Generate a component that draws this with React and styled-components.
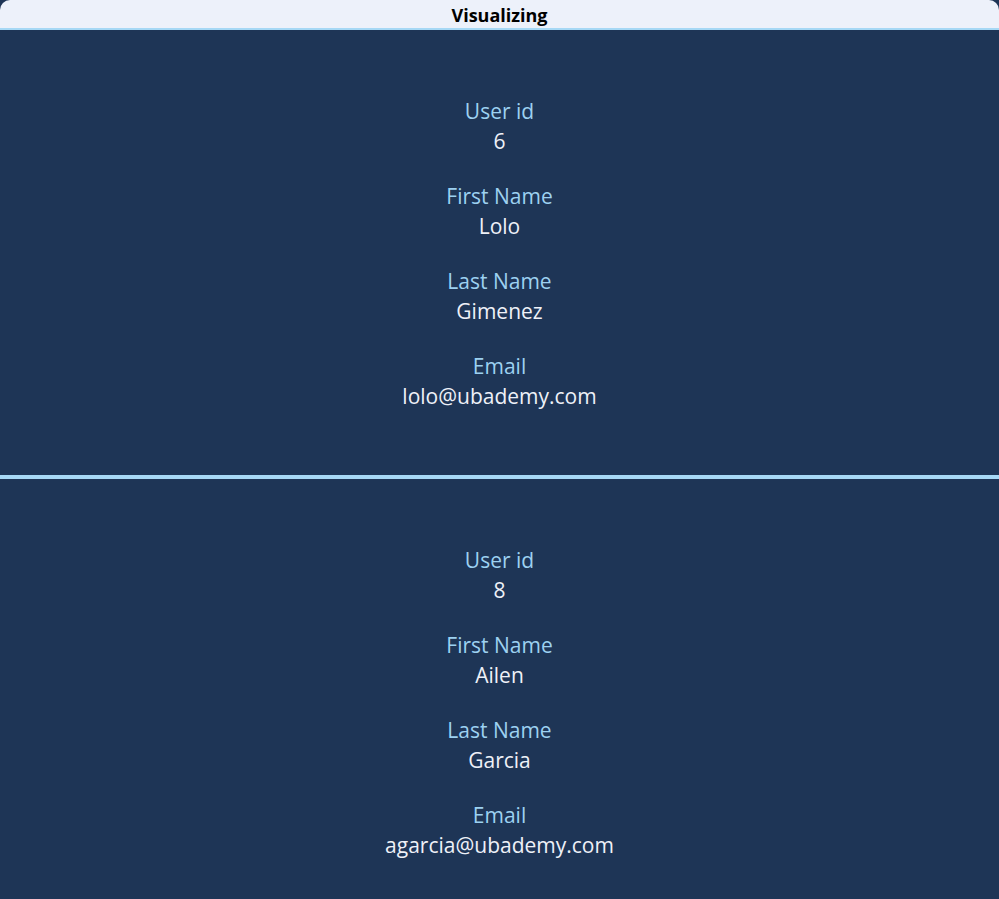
import React from 'react';
import styled, {createGlobalStyle} from 'styled-components';

const GlobalStyle = createGlobalStyle`
  body {
    margin: 0;
    background-color: #1e3556;
    font-family: "Open Sans", "Noto Sans", sans-serif;
  }
`;

const Page = styled.div`
  display: flex;
  flex-direction: column;
  min-height: 100vh;
`;

const Header = styled.header`
  height: 30px;
  box-sizing: border-box;
  padding-top: 2px;
  background-color: #edf1fa;
  border-radius: 10px 10px 0 0;
  border-bottom: 2px solid #a6d8f5;
  display: flex;
  align-items: center;
  justify-content: center;
  font-size: 18px;
  font-weight: bold;
  color: #000;
`;

const UserCard = styled.section`
  display: flex;
  flex-direction: column;
  align-items: center;
  gap: 25px;
  padding: 66px 0 64px;
  border-top: ${(props) => props.first ? 'none' : '4px solid #a6d8f5'};
`;

const Field = styled.div`
  display: flex;
  flex-direction: column;
  align-items: center;
  font-size: 21px;
  line-height: 30px;
`;

const Label = styled.span`
  color: #9dd1f1;
`;

const Value = styled.span`
  color: #eef1f8;
`;

const users = [
  {id: 6, firstName: 'Lolo', lastName: 'Gimenez', email: 'lolo@ubademy.com'},
  {id: 8, firstName: 'Ailen', lastName: 'Garcia', email: 'agarcia@ubademy.com'},
];

function App() {
  return (
    <Page>
      <GlobalStyle />
      <Header>Visualizing</Header>
      {users.map((user, i) => (
        <UserCard key={user.id} first={i === 0}>
          <Field><Label>User id</Label><Value>{user.id}</Value></Field>
          <Field><Label>First Name</Label><Value>{user.firstName}</Value></Field>
          <Field><Label>Last Name</Label><Value>{user.lastName}</Value></Field>
          <Field><Label>Email</Label><Value>{user.email}</Value></Field>
        </UserCard>
      ))}
    </Page>
  );
}

export default App;
